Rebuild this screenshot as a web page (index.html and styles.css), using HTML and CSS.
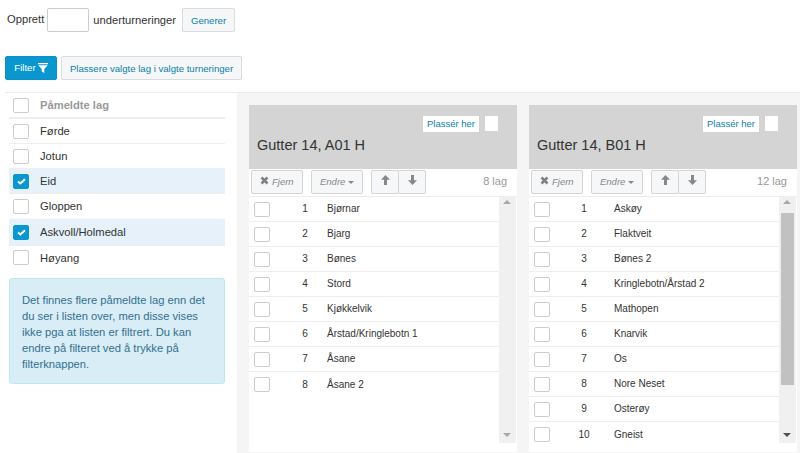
FILE: index.html
```html
<!DOCTYPE html>
<html lang="no">
<head>
<meta charset="utf-8">
<title>Underturneringer</title>
<link rel="stylesheet" href="styles.css">
</head>
<body>
<div class="create-row">
  <span class="create-label">Opprett</span>
  <span class="num-input"></span>
  <span>underturneringer</span>
  <button class="btn btn-gen">Generer</button>
</div>
<div class="action-row">
  <button class="btn btn-primary">Filter
    <svg class="funnel" width="10" height="10" viewBox="0 0 10 10"><path d="M0 0h10v1.300H0zM0.300 2.300h9.400L6.300 6v4L3.700 8.500V6z" fill="#fff"/></svg>
  </button>
  <button class="btn btn-place">Plassere valgte lag i valgte turneringer</button>
</div>
<div class="main">
  <aside class="side">
    <div class="side-head"><span class="cb"></span><span>Påmeldte lag</span></div>
    <div class="side-row"><span class="cb"></span><span>Førde</span></div>
    <div class="side-row"><span class="cb"></span><span>Jotun</span></div>
    <div class="side-row on"><span class="cb checked"><svg width="9" height="7" viewBox="0 0 9 7"><path d="M1 3.500l2.300 2L8 1.200" fill="none" stroke="#fff" stroke-width="2"/></svg></span><span>Eid</span></div>
    <div class="side-row tall"><span class="cb"></span><span>Gloppen</span></div>
    <div class="side-row tall on"><span class="cb checked"><svg width="9" height="7" viewBox="0 0 9 7"><path d="M1 3.500l2.300 2L8 1.200" fill="none" stroke="#fff" stroke-width="2"/></svg></span><span>Askvoll/Holmedal</span></div>
    <div class="side-row last"><span class="cb"></span><span>Høyang</span></div>
    <div class="alert">Det finnes flere påmeldte lag enn det du ser i listen over, men disse vises ikke pga at listen er filtrert. Du kan endre på filteret ved å trykke på filterknappen.</div>
  </aside>
  <section class="board">
    <article class="panel">
      <header class="panel-head">
        <div class="place"><span class="place-label">Plassér her</span><span class="place-cb"></span></div>
        <h2>Gutter 14, A01 H</h2>
      </header>
      <div class="tools">
        <button class="tool tool-fjern"><svg width="9" height="9" viewBox="0 0 9 9"><path d="M1.500 1.500l6 6M7.500 1.500l-6 6" stroke="#808080" stroke-width="2.600" fill="none"/></svg> Fjern</button>
        <button class="tool tool-endre">Endre <i class="caret"></i></button>
        <div class="arrows">
          <button class="tool tool-arrow"><svg width="9" height="10" viewBox="0 0 9 10"><path d="M4.500 0l4.500 4.800H6V10H3V4.800H0z" fill="#888"/></svg></button>
          <button class="tool tool-arrow"><svg width="9" height="10" viewBox="0 0 9 10"><path d="M4.500 10L0 5.200h3V0h3v5.200h3z" fill="#888"/></svg></button>
        </div>
        <span class="count">8 lag</span>
      </div>
      <div class="list-wrap">
        <ul class="list list-a">
          <li><span class="cb"></span><span class="n">1</span><span>Bjørnar</span></li>
          <li><span class="cb"></span><span class="n">2</span><span>Bjarg</span></li>
          <li><span class="cb"></span><span class="n">3</span><span>Bønes</span></li>
          <li><span class="cb"></span><span class="n">4</span><span>Stord</span></li>
          <li><span class="cb"></span><span class="n">5</span><span>Kjøkkelvik</span></li>
          <li><span class="cb"></span><span class="n">6</span><span>Årstad/Kringlebotn 1</span></li>
          <li><span class="cb"></span><span class="n">7</span><span>Åsane</span></li>
          <li><span class="cb"></span><span class="n">8</span><span>Åsane 2</span></li>
        </ul>
        <div class="scroll"><i class="arr up dim"></i><i class="arr down dim"></i></div>
      </div>
    </article>
    <article class="panel">
      <header class="panel-head">
        <div class="place"><span class="place-label">Plassér her</span><span class="place-cb"></span></div>
        <h2>Gutter 14, B01 H</h2>
      </header>
      <div class="tools">
        <button class="tool tool-fjern"><svg width="9" height="9" viewBox="0 0 9 9"><path d="M1.500 1.500l6 6M7.500 1.500l-6 6" stroke="#808080" stroke-width="2.600" fill="none"/></svg> Fjern</button>
        <button class="tool tool-endre">Endre <i class="caret"></i></button>
        <div class="arrows">
          <button class="tool tool-arrow"><svg width="9" height="10" viewBox="0 0 9 10"><path d="M4.500 0l4.500 4.800H6V10H3V4.800H0z" fill="#888"/></svg></button>
          <button class="tool tool-arrow"><svg width="9" height="10" viewBox="0 0 9 10"><path d="M4.500 10L0 5.200h3V0h3v5.200h3z" fill="#888"/></svg></button>
        </div>
        <span class="count">12 lag</span>
      </div>
      <div class="list-wrap">
        <ul class="list list-b">
          <li><span class="cb"></span><span class="n">1</span><span>Askøy</span></li>
          <li><span class="cb"></span><span class="n">2</span><span>Flaktveit</span></li>
          <li><span class="cb"></span><span class="n">3</span><span>Bønes 2</span></li>
          <li><span class="cb"></span><span class="n">4</span><span>Kringlebotn/Årstad 2</span></li>
          <li><span class="cb"></span><span class="n">5</span><span>Mathopen</span></li>
          <li><span class="cb"></span><span class="n">6</span><span>Knarvik</span></li>
          <li><span class="cb"></span><span class="n">7</span><span>Os</span></li>
          <li><span class="cb"></span><span class="n">8</span><span>Nore Neset</span></li>
          <li><span class="cb"></span><span class="n">9</span><span>Osterøy</span></li>
          <li><span class="cb"></span><span class="n">10</span><span>Gneist</span></li>
        </ul>
        <div class="scroll"><i class="arr up dim"></i><i class="thumb"></i><i class="arr down"></i></div>
      </div>
    </article>
  </section>
</div>
</body>
</html>
```
FILE: styles.css
```css
html, body { margin: 0; padding: 0; height: 453px; overflow: hidden; background: #fff; }
body { font: 11.200px/16px "Liberation Sans", Arial, sans-serif; color: #333; }
button { font-family: inherit; margin: 0; cursor: pointer; }
ul { list-style: none; margin: 0; padding: 0; }
h2 { margin: 0; font-weight: 400; font-size: 14.500px; line-height: 18px; color: #333; }

.create-row { display: flex; align-items: center; height: 24px; padding: 8px 0 0 7px; }
.create-label { margin-bottom: 2px; }
.num-input { box-sizing: border-box; width: 42px; height: 24px; border: 1px solid #ccc; border-radius: 2px; margin: 0 4px 0 3px; }
.btn { border: 1px solid #d9dcde; border-radius: 2px; background: #f5f7f8; color: #0b7fa8; font-size: 9.600px; }
.btn-gen { height: 24px; width: 53px; margin-left: 6px; padding: 0; }
.action-row { display: flex; gap: 4px; margin: 24px 0 0 5px; height: 24px; }
.btn-primary { width: 52px; background: #0a97d0; border-color: #0a8fc6; color: #fff; padding: 0 0 1px; display: flex; align-items: center; justify-content: center; gap: 2px; }
.btn-place { width: 181px; padding: 0; }

.main { display: flex; margin: 12px 0 0 5px; border-top: 1px solid #eee; height: 360px; }
.side { width: 232px; flex: none; }
.board { flex: 1; background: #f5f5f5; display: flex; gap: 12px; padding: 12px 3px 0 12px; }

.cb { box-sizing: border-box; display: flex; align-items: center; justify-content: center; width: 16px; height: 15px; border: 1px solid #ccc; border-radius: 2px; background: #fff; flex: none; }
.cb.checked { background: #0a97d0; border-color: #0a97d0; }

.side-head, .side-row { display: flex; align-items: center; gap: 11px; margin-left: 4px; width: 216px; padding-left: 4px; box-sizing: border-box; }
.side-head { border-bottom: 2px solid #eee; color: #999; font-weight: 700; height: 26px; }
.side-row { height: 25px; border-bottom: 1px solid #eee; }
.side-row.tall { height: 26px; padding-bottom: 1px; }
.side-row.last { height: 24px; padding-bottom: 1px; border-bottom: 0; }
.side-row.on { background: #e6f1fa; }
.alert { box-sizing: border-box; margin: 8px 0 0 4px; width: 216px; height: 106px; padding: 13px 12px; background: #d9edf7; border: 1px solid #bce8f1; border-radius: 3px; color: #31708f; }

.panel { width: 268px; background: #fff; display: flex; flex-direction: column; height: 347px; }
.panel-head { height: 64px; background: #d4d4d4; box-sizing: border-box; padding: 11px 8px 0; display: flex; flex-direction: column; }
.place { display: flex; justify-content: flex-end; align-items: flex-start; gap: 6px; padding-right: 11px; }
.place-label { background: #fff; color: #0b7fa8; font-size: 9.500px; padding: 0 4px; height: 16px; line-height: 16px; }
.place-cb { width: 13px; height: 15px; background: #fff; }
.panel-head h2 { margin-top: 4px; }

.tools { box-sizing: border-box; height: 28px; display: flex; align-items: flex-start; padding: 1px 2px 0; gap: 8px; border-bottom: 1px solid #eee; }
.tool { box-sizing: border-box; height: 24px; border: 1px solid #d5d5d5; border-radius: 2px; background: #f5f7f8; color: #888; font-style: italic; font-size: 9.500px; padding: 0 0 2px; }
.tool-fjern, .tool-endre { width: 52px; }
.caret { display: inline-block; border: 3px solid transparent; border-top-color: #888; border-bottom: 0; vertical-align: 1px; }
.arrows { display: flex; }
.tool-arrow { width: 28px; }
.tool-arrow + .tool-arrow { margin-left: -1px; }
.count { margin-left: auto; padding: 3px 8px 0 0; color: #999; font-size: 11px; }

.list-wrap { display: flex; height: 246px; }
.list { flex: 1; overflow: hidden; }
.list li { display: flex; align-items: center; height: 25px; box-sizing: border-box; border-bottom: 1px solid #eee; padding-left: 5px; font-size: 10px; }
.list li:last-child { border-bottom: 0; }
.n { width: 24px; text-align: center; color: #333; }
.list-a .n { margin: 0 10px 0 23px; }
.list-b .n { margin: 0 18px 0 22px; }
.scroll { position: relative; width: 17px; background: #f0f0f0; flex: none; margin-right: 1px; }
.arr { position: absolute; left: 4px; border: 4px solid transparent; }
.arr.up { top: 3px; border-top: 0; border-bottom: 4px solid #505050; }
.arr.down { bottom: 6px; border-bottom: 0; border-top: 4px solid #505050; }
.arr.dim.up { border-bottom-color: #a8a8a8; }
.arr.dim.down { border-top-color: #a8a8a8; }
.thumb { position: absolute; top: 16px; left: 2px; right: 2px; height: 172px; background: #c1c1c1; }
```
